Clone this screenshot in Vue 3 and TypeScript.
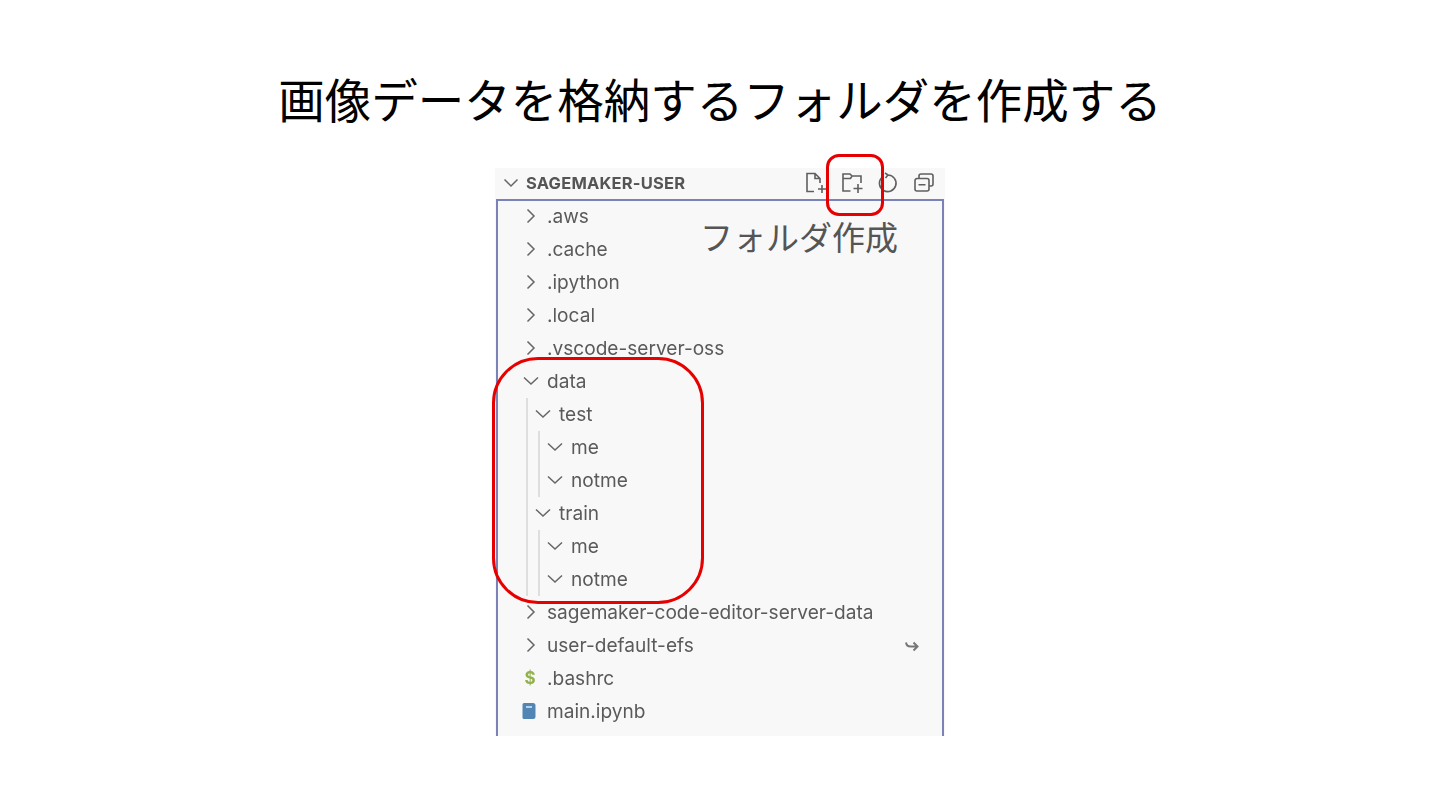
<template>
  <div class="slide">
    <h1 class="slide-title">画像データを格納するフォルダを作成する</h1>

    <div class="shot-wrap">
      <div class="explorer">
        <div class="explorer-head">
          <svg class="head-chevron" viewBox="0 0 16 16"><path d="M1.500 4.500 8 11l6.500-6.500" /></svg>
          <span class="explorer-name">SAGEMAKER-USER</span>
          <div class="head-actions">
            <svg class="action" viewBox="0 0 22 22">
              <path d="M9 19.500H2V1.500h8l5 5V11M10 1.500v5h5M17 13v8M13 17h8" />
            </svg>
            <svg class="action" viewBox="0 0 22 22">
              <path d="M9.500 19H2V2h7l2 2h9v7M2 6.500h7.500L11 4M17 12v9M12.500 16.500h9" />
            </svg>
            <svg class="action" viewBox="0 0 22 22">
              <path d="M4.800 5.500A8.300 8.300 0 1 0 11 3M8 1l3 2-2.500 3" />
            </svg>
            <svg class="action" viewBox="0 0 22 22">
              <path d="M6 6V4a2 2 0 0 1 2-2h10a2 2 0 0 1 2 2v8a2 2 0 0 1-2 2h-2M4 6.500h10a2 2 0 0 1 2 2V17a2 2 0 0 1-2 2H4a2 2 0 0 1-2-2V8.500a2 2 0 0 1 2-2ZM5.500 12.800h7" />
            </svg>
          </div>
        </div>

        <div class="tree">
          <div
            v-for="row in rows"
            :key="row.id"
            class="tree-row"
            :style="{ paddingLeft: 25 + row.depth * 12 + 'px' }"
          >
            <span
              v-for="level in row.depth"
              :key="level"
              class="guide"
              :style="{ left: 16 + level * 12 + 'px' }"
            ></span>

            <svg v-if="row.kind === 'closed'" class="chevron" viewBox="0 0 16 16">
              <path d="M4.500 1.500 11 8l-6.500 6.500" />
            </svg>
            <svg v-else-if="row.kind === 'open'" class="chevron" viewBox="0 0 16 16">
              <path d="M1 4.500 8 11l7-6.500" />
            </svg>
            <span v-else-if="row.kind === 'shell'" class="shell-icon">$</span>
            <svg v-else-if="row.kind === 'notebook'" class="file-icon" viewBox="0 0 16 18">
              <path class="book" d="M3 1h9a2.500 2.500 0 0 1 2.500 2.500v11A2.500 2.500 0 0 1 12 17H3a1.500 1.500 0 0 1-1.500-1.500v-13A1.500 1.500 0 0 1 3 1Z" />
              <path class="book-mark" d="M5 5h6" />
            </svg>
            <svg v-else class="file-icon faded" viewBox="0 0 16 18">
              <path class="book" d="M3 1h7l4 4v11a1 1 0 0 1-1 1H3a1 1 0 0 1-1-1V2a1 1 0 0 1 1-1Z" />
            </svg>

            <span class="row-label">{{ row.name }}</span>

            <svg v-if="row.symlink" class="symlink" viewBox="0 0 16 14">
              <path d="M2 3.500c.5 3 2 4 4.500 4H13M9.500 3.500l4 4-4 4" />
            </svg>
          </div>
        </div>
      </div>

      <!-- 注釈 -->
      <div class="callout callout-action"></div>
      <div class="callout callout-tree"></div>
      <span class="callout-label">フォルダ作成</span>
    </div>
  </div>
</template>

<script setup lang="ts">
interface TreeRow {
  id: number
  name: string
  depth: number
  kind: 'closed' | 'open' | 'shell' | 'notebook' | 'file'
  symlink?: boolean
}

const rows: TreeRow[] = [
  { id: 1, name: '.aws', depth: 0, kind: 'closed' },
  { id: 2, name: '.cache', depth: 0, kind: 'closed' },
  { id: 3, name: '.ipython', depth: 0, kind: 'closed' },
  { id: 4, name: '.local', depth: 0, kind: 'closed' },
  { id: 5, name: '.vscode-server-oss', depth: 0, kind: 'closed' },
  { id: 6, name: 'data', depth: 0, kind: 'open' },
  { id: 7, name: 'test', depth: 1, kind: 'open' },
  { id: 8, name: 'me', depth: 2, kind: 'open' },
  { id: 9, name: 'notme', depth: 2, kind: 'open' },
  { id: 10, name: 'train', depth: 1, kind: 'open' },
  { id: 11, name: 'me', depth: 2, kind: 'open' },
  { id: 12, name: 'notme', depth: 2, kind: 'open' },
  { id: 13, name: 'sagemaker-code-editor-server-data', depth: 0, kind: 'closed' },
  { id: 14, name: 'user-default-efs', depth: 0, kind: 'closed', symlink: true },
  { id: 15, name: '.bashrc', depth: 0, kind: 'shell' },
  { id: 16, name: 'main.ipynb', depth: 0, kind: 'notebook' },
  { id: 17, name: '', depth: 0, kind: 'file' },
]
</script>

<style>
html,
body {
  background: #fff;
  overflow: hidden;
}
</style>

<style scoped>
.slide {
  width: 1440px;
  height: 810px;
  padding-top: 66px;
  box-sizing: border-box;
  display: flex;
  flex-direction: column;
  align-items: center;
  background: #fff;
  font-family: "Noto Sans CJK JP", "Liberation Sans", sans-serif;
}

.slide-title {
  margin: 0 0 38px;
  font-size: 46.5px;
  line-height: 64px;
  font-weight: 400;
  color: #000;
}

.shot-wrap {
  position: relative;
  width: 450px;
  height: 568px;
}

.explorer {
  height: 100%;
  overflow: hidden;
  background: #f8f8f8;
  display: flex;
  flex-direction: column;
  filter: blur(0.35px);
}

.explorer-head {
  flex: none;
  height: 31px;
  display: flex;
  align-items: center;
  padding: 0 10px 1px 8px;
  box-sizing: border-box;
  font-family: Inter, "Liberation Sans", sans-serif;
}

.head-chevron {
  width: 16px;
  height: 16px;
  margin-right: 7px;
  fill: none;
  stroke: #666;
  stroke-width: 1.5;
}

.explorer-name {
  font-size: 16.5px;
  font-weight: 700;
  letter-spacing: 0.2px;
  color: #555;
}

.head-actions {
  margin-left: auto;
  display: flex;
  gap: 14px;
}

.action {
  width: 22px;
  height: 22px;
  fill: none;
  stroke: #5f5f5f;
  stroke-width: 1.6;
}

.tree {
  flex: 1;
  margin: 0 1px;
  border: 2px solid #7a82b8;
  border-bottom: none;
  font-family: Inter, "Liberation Sans", sans-serif;
}

.tree-row {
  position: relative;
  height: 33px;
  display: flex;
  align-items: center;
  gap: 8px;
}

.tree-row:first-child {
  margin-top: -1.5px;
}

.guide {
  position: absolute;
  top: 0;
  bottom: 0;
  width: 1.5px;
  background: #dedede;
}

.chevron {
  flex: none;
  width: 16px;
  height: 16px;
  fill: none;
  stroke: #666;
  stroke-width: 1.5;
}

.shell-icon {
  flex: none;
  width: 14px;
  margin-right: 2px;
  text-align: center;
  font-size: 17px;
  font-weight: 700;
  color: #93b24c;
}

.file-icon {
  flex: none;
  width: 16px;
  height: 18px;
  margin-left: -2px;
  margin-right: 2px;
}

.file-icon.faded {
  opacity: 0.3;
}

.book {
  fill: #5185b4;
}

.book-mark {
  fill: none;
  stroke: #dce8f2;
  stroke-width: 1.5;
}

.row-label {
  font-size: 19.1px;
  line-height: 33px;
  color: #5a5a5a;
  white-space: nowrap;
}

.symlink {
  position: absolute;
  right: 22px;
  top: 10px;
  width: 16px;
  height: 14px;
  fill: none;
  stroke: #777;
  stroke-width: 2;
}

.callout {
  position: absolute;
  box-sizing: border-box;
  border: 3.5px solid #e60000;
}

.callout-action {
  left: 331px;
  top: -14px;
  width: 58px;
  height: 62px;
  border-radius: 13px;
}

.callout-tree {
  left: -3px;
  top: 189px;
  width: 212px;
  height: 247px;
  border-radius: 46px;
}

.callout-label {
  position: absolute;
  left: 205px;
  top: 46px;
  margin-top: -2px;
  font-size: 33px;
  line-height: 48px;
  color: #555;
  white-space: nowrap;
}
</style>
